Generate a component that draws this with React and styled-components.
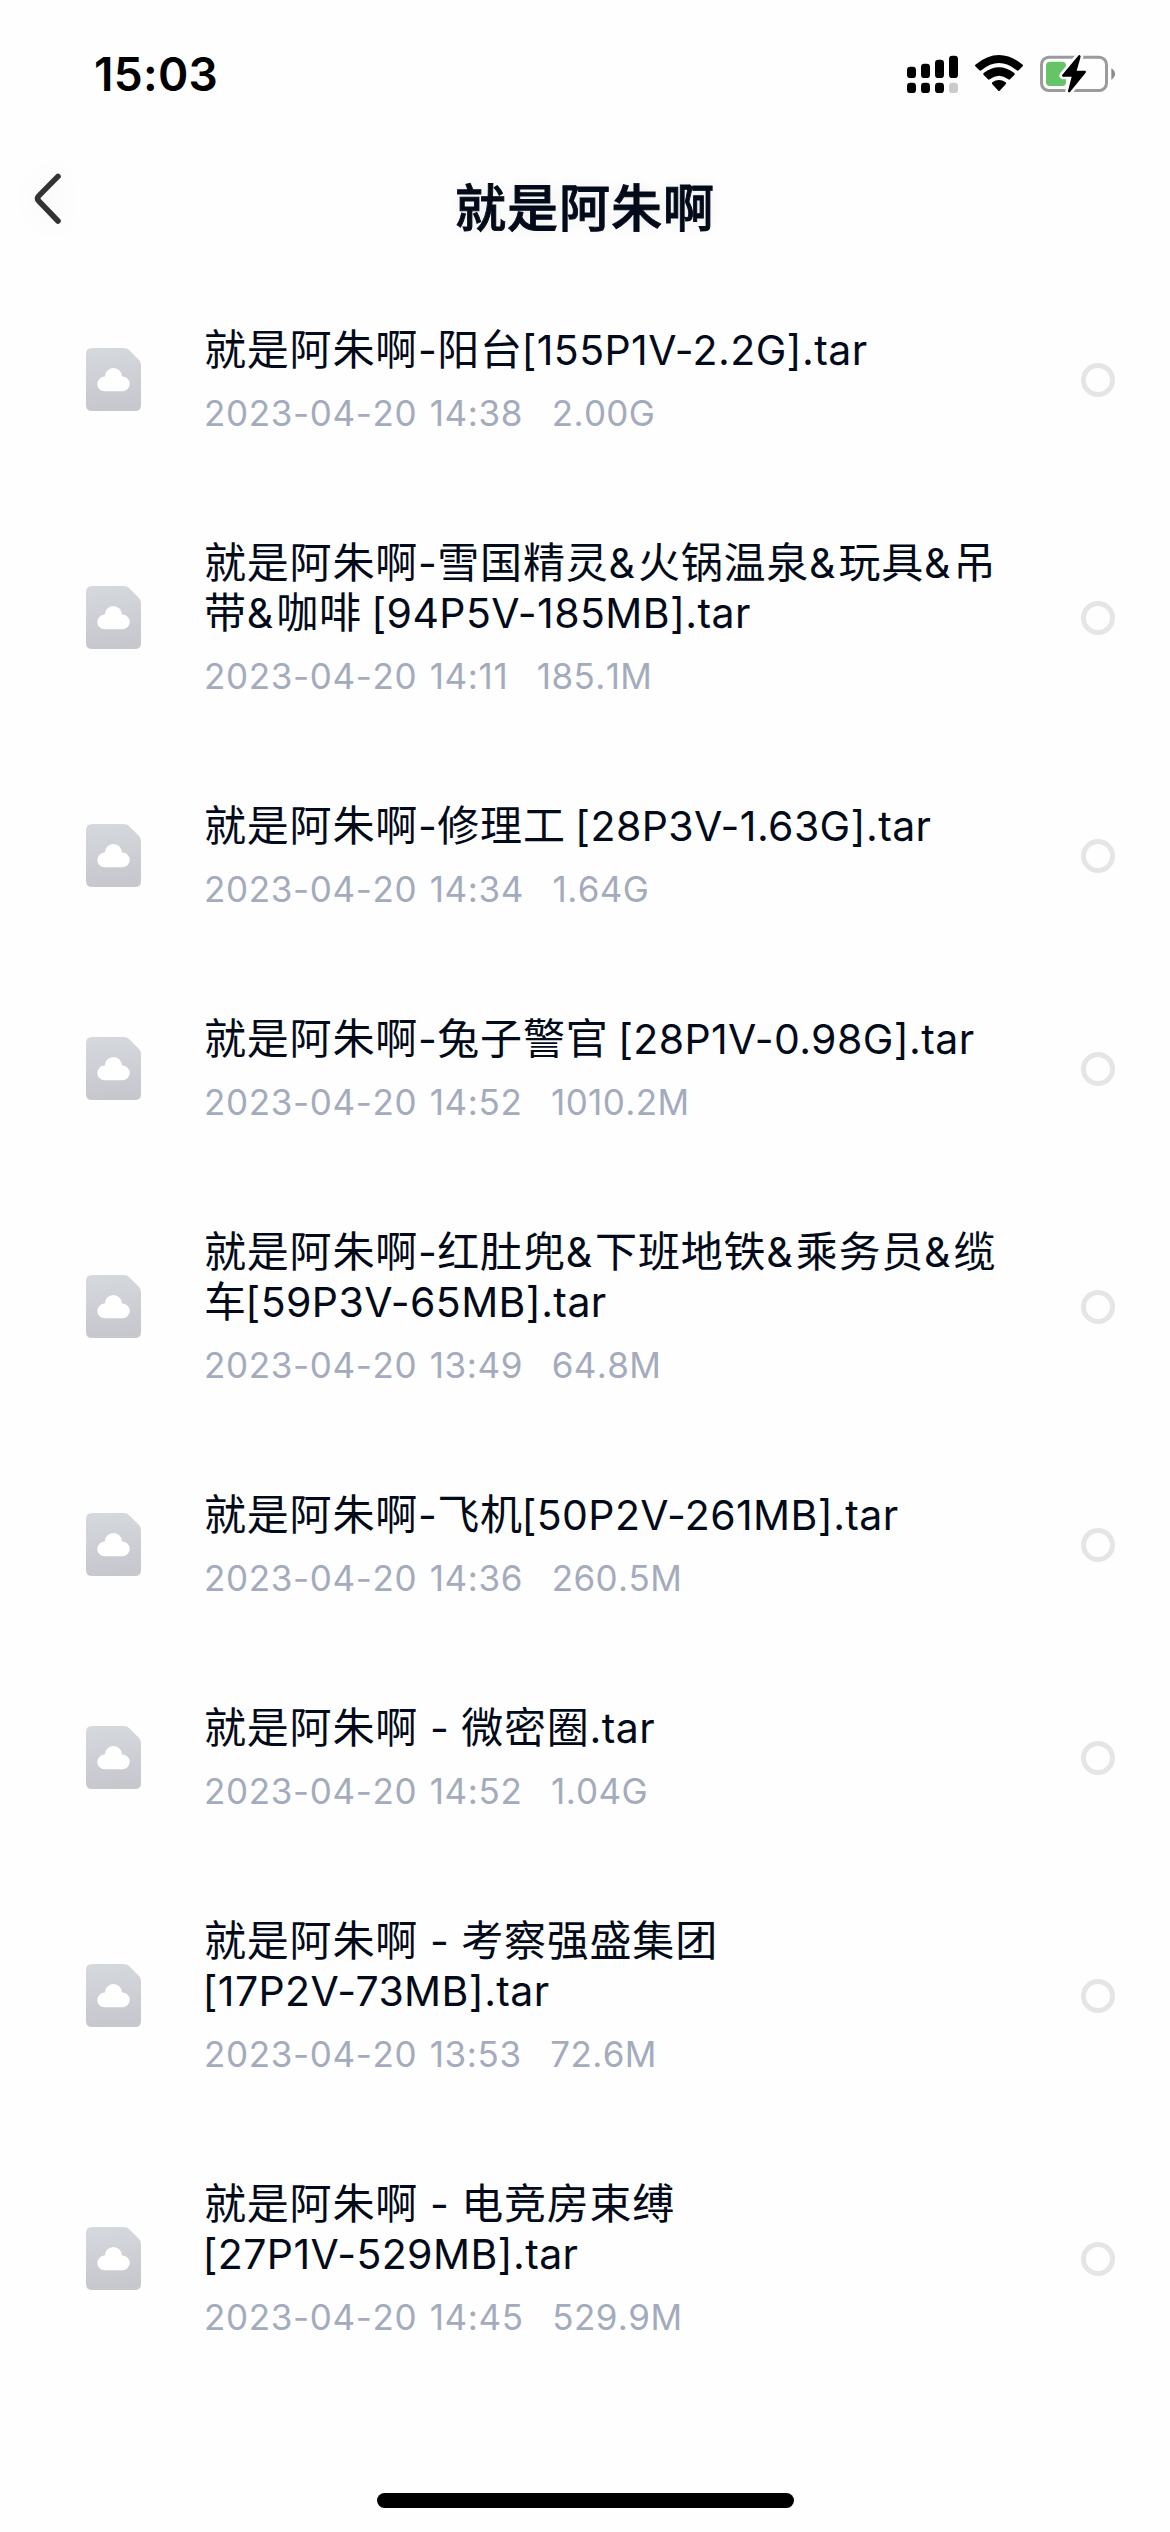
import React from 'react';
import styled, { createGlobalStyle, css } from 'styled-components';

const files = [
  { name: '就是阿朱啊-阳台[155P1V-2.2G].tar', date: '2023-04-20 14:38', size: '2.00G' },
  { name: '就是阿朱啊-雪国精灵&火锅温泉&玩具&吊\n带&咖啡 [94P5V-185MB].tar', date: '2023-04-20 14:11', size: '185.1M' },
  { name: '就是阿朱啊-修理工 [28P3V-1.63G].tar', date: '2023-04-20 14:34', size: '1.64G' },
  { name: '就是阿朱啊-兔子警官 [28P1V-0.98G].tar', date: '2023-04-20 14:52', size: '1010.2M' },
  { name: '就是阿朱啊-红肚兜&下班地铁&乘务员&缆\n车[59P3V-65MB].tar', date: '2023-04-20 13:49', size: '64.8M' },
  { name: '就是阿朱啊-飞机[50P2V-261MB].tar', date: '2023-04-20 14:36', size: '260.5M' },
  { name: '就是阿朱啊 - 微密圈.tar', date: '2023-04-20 14:52', size: '1.04G' },
  { name: '就是阿朱啊 - 考察强盛集团\n[17P2V-73MB].tar', date: '2023-04-20 13:53', size: '72.6M' },
  { name: '就是阿朱啊 - 电竞房束缚\n[27P1V-529MB].tar', date: '2023-04-20 14:45', size: '529.9M' },
];

export default function App() {
  return (
    <Screen>
      <GlobalStyle />
      <StatusBar>
        <Time>15:03</Time>
        <StatusIcons>
          <SignalIcon />
          <WifiIcon />
          <BatteryIcon />
        </StatusIcons>
      </StatusBar>
      <NavBar>
        <BackButton aria-label="返回">
          <svg width="28" height="52" viewBox="0 0 28 52" fill="none">
            <path d="M24 3.4 L5 22.6 Q2.2 25.4 5 28.2 L24 48" stroke="#333" strokeWidth="5.6" strokeLinecap="round" />
          </svg>
        </BackButton>
        <NavTitle>就是阿朱啊</NavTitle>
      </NavBar>
      <List>
        {files.map((file) => (
          <FileRow key={file.name} {...file} />
        ))}
      </List>
      <HomeIndicator />
    </Screen>
  );
}

function FileRow({ name, date, size }) {
  return (
    <Row>
      <FileIcon />
      <Info>
        {name.split('\n').map((line) => (
          <Name key={line}>
            {line.split(/([\x20-\x7e]+)/).map((part, i) => (
              i % 2 ? (
                <Latin key={i} $wide={part === '&'} $bracket={part.trim().startsWith('[')}>{part}</Latin>
              ) : part
            ))}
          </Name>
        ))}
        <Meta>
          <span>{date}</span>
          <Size>{size}</Size>
        </Meta>
      </Info>
      <Radio />
    </Row>
  );
}

function FileIcon() {
  return (
    <svg width="55" height="63" viewBox="0 0 55 63">
      <defs>
        <linearGradient id="sheet" x1="0" y1="0" x2="0.1" y2="1">
          <stop offset="0" stopColor="#d5d9de" />
          <stop offset="1" stopColor="#c7c7ce" />
        </linearGradient>
      </defs>
      <path d="M6 0H38Q41 0 43 2L53 12Q55 14 55 17V57Q55 63 49 63H6Q0 63 0 57V6Q0 0 6 0Z" fill="url(#sheet)" />
      <path d="M18.5 43.3A7.3 7.3 0 0 1 18.8 28.6A8.6 8.6 0 0 1 36 28.6A7.3 7.3 0 0 1 36.8 43.3Z" fill="#fff" />
    </svg>
  );
}

function SignalIcon() {
  return (
    <svg width="51" height="38" viewBox="81 75 153 114">
      <rect x="81" y="110" width="27" height="34" rx="10" />
      <rect x="123" y="101" width="27" height="43" rx="10" />
      <rect x="165" y="89" width="27" height="55" rx="10" />
      <rect x="207" y="77" width="27" height="67" rx="10" />
      <rect x="81" y="158" width="27" height="31" rx="10" />
      <rect x="123" y="158" width="27" height="31" rx="10" />
      <rect x="165" y="158" width="27" height="31" rx="10" />
      <rect x="207" y="158" width="27" height="31" rx="10" fill="#cbcbcb" />
    </svg>
  );
}

function WifiIcon() {
  return (
    <svg width="48" height="38" viewBox="285 75 144 114">
      <path d="M286 104Q357 46 428 104Q430 106 428 109L416 121Q413 123 410 121Q357 77 304 121Q301 123 298 121L286 109Q284 106 286 104Z" />
      <path d="M311 129Q357 94 403 129Q406 132 403 135L390 148Q388 150 385 148Q357 126 329 148Q326 150 324 148L311 135Q308 132 311 129Z" />
      <path d="M337 157Q357 143 377 157Q380 160 377 163L359 182Q357 184 355 182L337 163Q334 160 337 157Z" />
    </svg>
  );
}

function BatteryIcon() {
  return (
    <svg width="75" height="38" viewBox="480 75 225 114">
      <rect x="484.5" y="81.5" width="195" height="100" rx="22" fill="none" stroke="#9b9b9b" strokeWidth="9" />
      <path d="M694 115Q705 122 705 132Q705 142 694 149Z" fill="#8b8b8b" />
      <rect x="498" y="95" width="60" height="73" rx="12" fill="#66c466" />
      <path d="M596 76L547 134Q544 139 549 140H575L564 183Q564 190 570 186L617 128Q619 123 615 122H590L602 80Q601 73 596 76Z" stroke="#fff" strokeWidth="16" strokeLinejoin="round" />
      <path d="M596 76L547 134Q544 139 549 140H575L564 183Q564 190 570 186L617 128Q619 123 615 122H590L602 80Q601 73 596 76Z" />
    </svg>
  );
}

const GlobalStyle = createGlobalStyle`
  * {
    box-sizing: border-box;
  }
  body {
    margin: 0;
    background: #fefefe;
    font-family: Inter, "Noto Sans CJK SC", sans-serif;
  }
`;

const Screen = styled.div`
  width: 1170px;
  height: 2532px;
  display: flex;
  flex-direction: column;
  background: #fefefe;
  overflow: hidden;
`;

const StatusBar = styled.header`
  height: 148px;
  padding: 0 55px 0 94px;
  display: flex;
  align-items: center;
  justify-content: space-between;
`;

const Time = styled.span`
  font-size: 46px;
  font-weight: 600;
  letter-spacing: 0.3px;
  color: #000;
`;

const StatusIcons = styled.div`
  display: flex;
  gap: 17px;
`;

const NavBar = styled.nav`
  height: 125px;
  padding: 0 34px;
  display: grid;
  grid-template-columns: 60px 1fr 60px;
`;

const BackButton = styled.button`
  height: 52px;
  margin-top: 25px;
  padding: 0;
  border: 0;
  background: none;
  text-align: left;
  & svg {
    display: block;
    filter: drop-shadow(0 0 14px rgba(0, 0, 0, 0.06));
  }
`;

const NavTitle = styled.h1`
  margin: 20px 0 0;
  font-family: "Noto Sans CJK SC", sans-serif;
  font-size: 51px;
  line-height: 74px;
  font-weight: 500;
  letter-spacing: 1px;
  text-align: center;
  color: #030b1a;
  -webkit-text-stroke: 0.9px #030b1a;
  text-shadow: 0 0 14px rgba(0, 0, 0, 0.08);
`;

const List = styled.main`
  flex: 1;
`;

const Row = styled.div`
  display: flex;
  align-items: center;
  padding: 50.5px 55px 50.5px 86px;
`;

const Info = styled.div`
  flex: 1;
  margin-left: 63px;
`;

const Name = styled.div`
  height: 50px;
  font-family: "Noto Sans CJK SC", sans-serif;
  font-size: 42px;
  line-height: 45px;
  letter-spacing: 0.8px;
  white-space: pre;
  color: #030b1a;
`;

const Latin = styled.span`
  font-family: Inter, sans-serif;
  font-size: 41px;
  line-height: 0;
  letter-spacing: ${(props) => (props.$wide ? '3px' : '0.4px')};

  ${(props) => props.$bracket
    && css`
      margin-left: -1.5px;
      word-spacing: -1px;
    `};
`;

const Meta = styled.div`
  display: flex;
  gap: 28.5px;
  margin-top: 16px;
  font-size: 35px;
  line-height: 46px;
  letter-spacing: 0.65px;
  word-spacing: 2px;
  font-kerning: none;
  white-space: pre;
  color: #a3abbd;
`;

const Size = styled.span`
  letter-spacing: 0.4px;
`;

const Radio = styled.span`
  width: 34px;
  height: 34px;
  border: 5px solid #e3e5e7;
  border-radius: 50%;
`;

const HomeIndicator = styled.div`
  width: 417px;
  height: 15px;
  margin: 0 0 24px 377px;
  border-radius: 8px;
  background: #000;
`;
